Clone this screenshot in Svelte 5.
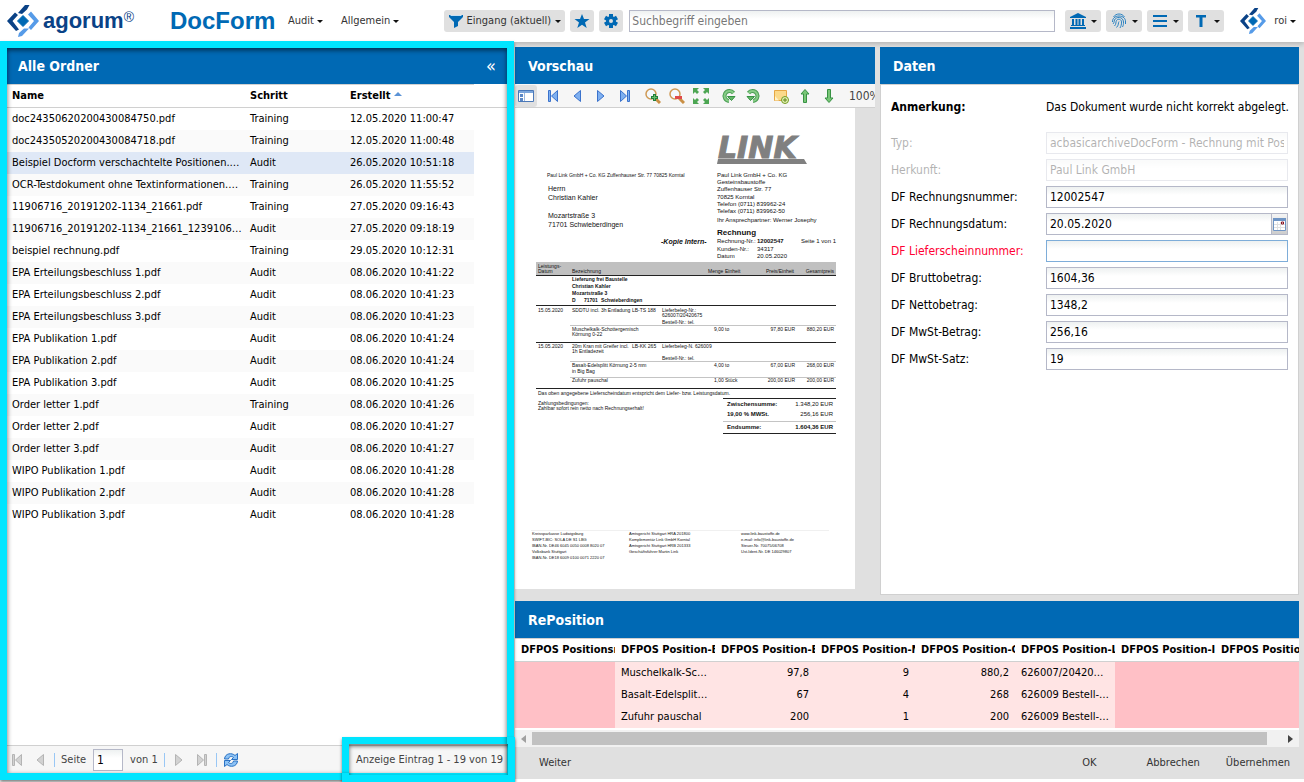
<script lang="ts">
  type Folder = [name: string, step: string, created: string];

  const folders: Folder[] = [
    ['doc24350620200430084750.pdf', 'Training', '12.05.2020 11:00:47'],
    ['doc24350520200430084718.pdf', 'Training', '12.05.2020 11:00:48'],
    ['Beispiel Docform verschachtelte Positionen.pdf', 'Audit', '26.05.2020 10:51:18'],
    ['OCR-Testdokument ohne Textinformationen.pdf', 'Training', '26.05.2020 11:55:52'],
    ['11906716_20191202-1134_21661.pdf', 'Training', '27.05.2020 09:16:43'],
    ['11906716_20191202-1134_21661_1239106.pdf', 'Audit', '27.05.2020 09:18:19'],
    ['beispiel rechnung.pdf', 'Training', '29.05.2020 10:12:31'],
    ['EPA Erteilungsbeschluss 1.pdf', 'Audit', '08.06.2020 10:41:22'],
    ['EPA Erteilungsbeschluss 2.pdf', 'Audit', '08.06.2020 10:41:23'],
    ['EPA Erteilungsbeschluss 3.pdf', 'Audit', '08.06.2020 10:41:23'],
    ['EPA Publikation 1.pdf', 'Audit', '08.06.2020 10:41:24'],
    ['EPA Publikation 2.pdf', 'Audit', '08.06.2020 10:41:24'],
    ['EPA Publikation 3.pdf', 'Audit', '08.06.2020 10:41:25'],
    ['Order letter 1.pdf', 'Training', '08.06.2020 10:41:26'],
    ['Order letter 2.pdf', 'Audit', '08.06.2020 10:41:27'],
    ['Order letter 3.pdf', 'Audit', '08.06.2020 10:41:27'],
    ['WIPO Publikation 1.pdf', 'Audit', '08.06.2020 10:41:28'],
    ['WIPO Publikation 2.pdf', 'Audit', '08.06.2020 10:41:28'],
    ['WIPO Publikation 3.pdf', 'Audit', '08.06.2020 10:41:28'],
  ];

  let selected = $state(2);

  const fields = [
    { id: 'typ', label: 'Typ:', value: 'acbasicarchiveDocForm - Rechnung mit Positionen', disabled: true },
    { id: 'herkunft', label: 'Herkunft:', value: 'Paul Link GmbH', disabled: true },
    { id: 'nummer', label: 'DF Rechnungsnummer:', value: '12002547' },
    { id: 'datum', label: 'DF Rechnungsdatum:', value: '20.05.2020', date: true },
    { id: 'lieferschein', label: 'DF Lieferscheinnummer:', value: '', active: true },
    { id: 'brutto', label: 'DF Bruttobetrag:', value: '1604,36' },
    { id: 'netto', label: 'DF Nettobetrag:', value: '1348,2' },
    { id: 'mwst', label: 'DF MwSt-Betrag:', value: '256,16' },
    { id: 'satz', label: 'DF MwSt-Satz:', value: '19' },
  ];

  const posHeads = [
    'DFPOS Positionsnummer',
    'DFPOS Position-Bezeichnung',
    'DFPOS Position-Einzelpreis',
    'DFPOS Position-Menge',
    'DFPOS Position-Gesamt',
    'DFPOS Position-Lieferschein',
    'DFPOS Position-Info',
    'DFPOS Position-Rabatt',
  ];
  const positions = [
    ['', 'Muschelkalk-Schotter', '97,8', '9', '880,2', '626007/20420675', '', ''],
    ['', 'Basalt-Edelsplitt Körnung', '67', '4', '268', '626009 Bestell-Nr.', '', ''],
    ['', 'Zufuhr pauschal', '200', '1', '200', '626009 Bestell-Nr.', '', ''],
  ];

  // Text runs on the invoice sheet: x, y, size, text, style flags (b = bold, i = italic, e = end-aligned)
  const sheet: [number, number, number, string, string?][] = [
    [32, 69, 5, 'Paul Link GmbH + Co. KG  Zuffenhauser Str. 77  70825 Korntal'],
    [33, 83, 7, 'Herrn'],
    [33, 92, 7, 'Christian Kahler'],
    [33, 110, 7, 'Mozartstraße 3'],
    [33, 119, 7, '71701 Schwieberdingen'],
    [146, 136, 7, '-Kopie Intern-', 'bi'],
    [202, 69, 6, 'Paul Link GmbH + Co. KG'],
    [202, 76, 6, 'Gesteinsbaustoffe'],
    [202, 83, 6, 'Zuffenhauser Str. 77'],
    [202, 91, 6, '70825 Korntal'],
    [202, 98, 6, 'Telefon (0711) 839962-24'],
    [202, 105, 6, 'Telefax (0711) 839962-50'],
    [202, 114, 6, 'Ihr Ansprechpartner: Werner Josephy'],
    [202, 127, 8, 'Rechnung', 'b'],
    [202, 135, 6, 'Rechnung-Nr.:'],
    [242, 135, 6, '12002547', 'b'],
    [286, 135, 6, 'Seite 1 von 1'],
    [202, 143, 6, 'Kunden-Nr.:'],
    [242, 143, 6, '34317'],
    [202, 150, 6, 'Datum'],
    [242, 150, 6, '20.05.2020'],
    [23, 160, 5, 'Leistungs-'],
    [23, 165, 5, 'Datum'],
    [57, 165, 5, 'Bezeichnung'],
    [193, 165, 5, 'Menge'],
    [210, 165, 5, 'Einheit'],
    [279, 165, 5, 'Preis/Einheit', 'e'],
    [319, 165, 5, 'Gesamtpreis', 'e'],
    [57, 173, 5, 'Lieferung frei Baustelle', 'b'],
    [57, 180, 5, 'Christian Kahler', 'b'],
    [57, 187, 5, 'Mozartstraße 3', 'b'],
    [57, 194, 5, 'D', 'b'],
    [69, 194, 5, '71701', 'b'],
    [86, 194, 5, 'Schwieberdingen', 'b'],
    [23, 204, 5, '15.05.2020'],
    [57, 204, 5, 'SDDTU incl. 3h Entladung'],
    [117, 204, 5, 'LB-TS 188'],
    [147, 204, 5, 'Lieferbeleg-Nr.:'],
    [147, 209, 5, '626007/20420675'],
    [147, 216, 5, 'Bestell-Nr.: tel.'],
    [57, 223, 5, 'Muschelkalk-Schottergemisch'],
    [57, 228, 5, 'Körnung 0-22'],
    [199, 223, 5, '9,00'],
    [210, 223, 5, 'to'],
    [280, 223, 5, '97,80 EUR', 'e'],
    [319, 223, 5, '880,20 EUR', 'e'],
    [23, 240, 5, '15.05.2020'],
    [57, 240, 5, '20m Kran mit Greifer incl.'],
    [117, 240, 5, 'LB-KK 265'],
    [57, 245, 5, '1h Entladezeit'],
    [147, 240, 5, 'Lieferbeleg-N.'],
    [180, 240, 5, '626009'],
    [147, 252, 5, 'Bestell-Nr.: tel.'],
    [57, 259, 5, 'Basalt-Edelsplitt Körnung 2-5 mm'],
    [57, 265, 5, 'in Big Bag'],
    [199, 259, 5, '4,00'],
    [210, 259, 5, 'to'],
    [280, 259, 5, '67,00 EUR', 'e'],
    [319, 259, 5, '268,00 EUR', 'e'],
    [57, 274, 5, 'Zufuhr pauschal'],
    [199, 274, 5, '1,00'],
    [210, 274, 5, 'Stück'],
    [280, 274, 5, '200,00 EUR', 'e'],
    [319, 274, 5, '200,00 EUR', 'e'],
    [23, 287, 5, 'Das oben angegebene Lieferscheindatum entspricht dem Liefer- bzw. Leistungsdatum.'],
    [23, 297, 5, 'Zahlungsbedingungen:'],
    [23, 302, 5, 'Zahlbar sofort rein netto nach Rechnungserhalt!'],
    [212, 298, 6, 'Zwischensumme:', 'b'],
    [318, 298, 6, '1.348,20 EUR', 'e'],
    [212, 308, 6, '19,00 % MWSt.', 'b'],
    [318, 308, 6, '256,16 EUR', 'e'],
    [212, 321, 6, 'Endsumme:', 'b'],
    [318, 321, 6, '1.604,36 EUR', 'be'],
    [17, 427, 4, 'Kreissparkasse Ludwigsburg'],
    [17, 433, 4, 'SWIFT-BIC: SOLA DE S1 LBG'],
    [17, 439, 4, 'IBAN-Nr. DE46 6045 0050 0008 8020 07'],
    [17, 445, 4, 'Volksbank Stuttgart'],
    [17, 451, 4, 'IBAN-Nr. DE18 6009 0100 0071 2220 07'],
    [114, 427, 4, 'Amtsgericht Stuttgart HRA 201800'],
    [114, 433, 4, 'Komplementär Link GmbH Korntal'],
    [114, 439, 4, 'Amtsgericht Stuttgart HRB 201333'],
    [114, 445, 4, 'Geschäftsführer Martin Link'],
    [226, 427, 4, 'www.link-baustoffe.de'],
    [226, 433, 4, 'e-mail: info@link-baustoffe.de'],
    [226, 439, 4, 'Steuer-Nr. 70075/06708'],
    [226, 445, 4, 'Ust-Ident-Nr. DE 146029807'],
  ];
</script>

{#snippet logo(size: number)}
  <svg width={size} height={size} viewBox="0 0 32 32" aria-hidden="true">
    <path d="M11 8l7-8h4.500L20 4.500 15 9zM8 7.500l3 2.500-5.500 6 6.500 8.500L9 26 0 16z" fill="#0a4286" />
    <path d="M24 6.500L32 16l-8 9-2.500-2.500L27 16l-6-6.500zM17 23.500l5 0L15 31l-4 1 1-4z" fill="#569be8" />
    <path d="M16 10.500l5.500 5.500-5.500 5.500-5.500-5.500z" fill="#0069b4" stroke="#0069b4" stroke-linejoin="round" />
  </svg>
{/snippet}

{#snippet caret()}
  <svg width="6" height="3" viewBox="0 0 6 3" aria-hidden="true"><path d="M0 0h6L3 3z" fill="#111" /></svg>
{/snippet}

{#snippet arrow(kind: 'first' | 'prev' | 'next' | 'last', off = false)}
  <svg
    class:flip={kind === 'next' || kind === 'last'}
    width="16" height="16" viewBox="0 0 16 16" aria-hidden="true"
    fill={off ? '#d2d2d2' : '#7fb0f0'} stroke={off ? '#b4b4b4' : '#3a72cc'}
  >
    {#if kind === 'first' || kind === 'last'}
      <path d="M3.500 2.500h2v11h-2zM12.500 2.500v11L6.500 8z" />
    {:else}
      <path d="M11.500 2.500v11L5 8z" />
    {/if}
  </svg>
{/snippet}

{#snippet lens(plus: boolean)}
  <svg width="16" height="16" viewBox="0 0 16 16" aria-hidden="true">
    <path d="M9 9l6 6" stroke="#c98f45" stroke-width="3" />
    <circle cx="6" cy="6" r="5" fill="#f4f8fc" stroke="#cf9a55" stroke-width="1.500" />
    {#if plus}
      <path d="M9.500 6v7M6 9.500h7" stroke="#23803a" stroke-width="3" />
      <path d="M9.500 7v5M7 9.500h5" stroke="#69bd6d" />
    {:else}
      <path d="M6 9.500h7" stroke="#e04a4a" stroke-width="3" />
    {/if}
  </svg>
{/snippet}

{#snippet rotate(flip: boolean)}
  <svg class:flip width="16" height="16" viewBox="0 0 16 16" aria-hidden="true">
    <path d="M12.500 5A5 5 0 1 0 8 13" fill="none" stroke="#4b9e54" stroke-width="4" />
    <path d="M12.500 5A5 5 0 1 0 8 13" fill="none" stroke="#86cc86" stroke-width="2" />
    <path d="M6.500 8.500h7.500L10.500 12.500z" fill="#62b767" stroke="#379244" />
  </svg>
{/snippet}

{#snippet vertical(down: boolean)}
  <svg class:down width="16" height="16" viewBox="0 0 16 16" aria-hidden="true">
    <path d="M8 1.500L12 6H9.500v8.500h-3V6H4z" fill="#78c576" stroke="#379244" />
  </svg>
{/snippet}

<div class="app">
  <header class="topbar">
    <a class="brand" href="#start">{@render logo(32)}<span>agorum<sup>®</sup></span></a>
    <h1>DocForm</h1>
    <nav>
      <button class="menu">Audit {@render caret()}</button>
      <button class="menu">Allgemein {@render caret()}</button>
    </nav>
    <div class="search">
      <button class="tool filter">
        <svg width="14" height="14" viewBox="0 0 14 14" aria-hidden="true">
          <path d="M0 1h14v2L9 8v4l-4 2V8L0 3z" fill="#0069b4" /><path d="M1 1h12l-1 1H2z" fill="#c5dff2" />
        </svg>
        Eingang (aktuell) {@render caret()}
      </button>
      <button class="tool square" aria-label="Favoriten">
        <svg width="16" height="16" viewBox="0 0 16 16" aria-hidden="true"><path d="M8 1l2 5h5.500L11 9.500l1.700 5.500L8 11.800 3.300 15 5 9.500.5 6H6z" fill="#0069b4" /></svg>
      </button>
      <button class="tool square" aria-label="Einstellungen">
        <svg width="14" height="14" viewBox="0 0 14 14" aria-hidden="true">
          <path d="M7 0v14M1 3.500l12 7M13 3.500l-12 7" stroke="#0069b4" stroke-width="4" />
          <circle cx="7" cy="7" r="3.500" fill="#e0e0e0" stroke="#0069b4" stroke-width="3" />
        </svg>
      </button>
      <input type="text" placeholder="Suchbegriff eingeben" aria-label="Suchbegriff eingeben" />
    </div>
    <div class="tools">
      <button class="tool" aria-label="Archiv">
        <svg width="16" height="16" viewBox="0 0 16 16" aria-hidden="true" fill="#0069b4">
          <path d="M8 0l8 4v1H0V4zM2 6h2v6H2zM5.500 6h2v6h-2zM8.500 6h2v6h-2zM12 6h2v6h-2zM1 12h14v1H1zM0 14h16v2H0z" />
        </svg>{@render caret()}
      </button>
      <button class="tool" aria-label="Identität">
        <svg width="16" height="16" viewBox="0 0 16 16" aria-hidden="true" fill="none" stroke="#2a82c2">
          <path d="M2.500 4C5 0 11 0 13.500 4M1.500 9C1 1 15 1 14.500 9v2M2 11c1-1 1-2 1.500-4C5 3.500 12 3 12.500 9c0 2 0 3-1 5M3.500 13c2-2 1-4 2-5.500 2-2.500 5-1 5 1.500 0 3-.5 4-1.500 6M5.500 14.500C8 12 7 10 8 8.500" />
        </svg>{@render caret()}
      </button>
      <button class="tool" aria-label="Liste">
        <svg width="16" height="16" viewBox="0 0 16 16" aria-hidden="true"><path d="M1 3h14M1 8h14M1 13h14" stroke="#0069b4" stroke-width="2" /></svg>{@render caret()}
      </button>
      <button class="tool" aria-label="Text">
        <svg width="16" height="16" viewBox="0 0 16 16" aria-hidden="true"><path d="M3 2h10v2.500H9.500V14h-3V4.500H3z" fill="#0069b4" /></svg>{@render caret()}
      </button>
    </div>
    <div class="user">{@render logo(26)}<button class="menu">roi {@render caret()}</button></div>
  </header>

  <main>
    <section class="folders">
      <div class="title"><h2>Alle Ordner</h2><button aria-label="Einklappen">«</button></div>
      <div class="list">
        <table>
          <colgroup><col class="c-name" /><col class="c-step" /><col class="c-date" /></colgroup>
          <thead>
            <tr>
              <th>Name</th>
              <th>Schritt</th>
              <th>Erstellt <svg width="8" height="5" viewBox="0 0 8 5" aria-hidden="true"><path d="M0 4h8L4 0z" fill="#5b93d6" /></svg></th>
            </tr>
          </thead>
          <tbody>
            {#each folders as [name, step, created], i}
              <tr class:selected={i === selected} onclick={() => (selected = i)}>
                <td>{name}</td><td>{step}</td><td>{created}</td>
              </tr>
            {/each}
          </tbody>
        </table>
      </div>
      <div class="paging">
        <button disabled aria-label="Erste Seite">{@render arrow('first', true)}</button>
        <button disabled aria-label="Vorherige Seite">{@render arrow('prev', true)}</button>
        <i></i>
        <label for="page">Seite</label>
        <input id="page" type="text" value="1" />
        <span>von 1</span>
        <i></i>
        <button disabled aria-label="Nächste Seite">{@render arrow('next', true)}</button>
        <button disabled aria-label="Letzte Seite">{@render arrow('last', true)}</button>
        <i></i>
        <button aria-label="Aktualisieren">
          <svg width="16" height="16" viewBox="0 0 16 16" aria-hidden="true">
            <path d="M1.500 7C2 1 9 .5 12 3.500l2.500-2v6H8.500l2-2C9 4 6 4 5.500 7z" fill="#8cc2f5" stroke="#2a72c4" />
            <path d="M14.500 9c-.5 6-7.500 6.500-10.500 3.500l-2.500 2v-6h6l-2 2C7 12 10 12 10.500 9z" fill="#8cc2f5" stroke="#2a72c4" />
          </svg>
        </button>
        <span class="count">Anzeige Eintrag 1 - 19 von 19</span>
      </div>
    </section>

    <div class="work">
      <div class="upper">
        <section class="preview">
          <div class="title"><h2>Vorschau</h2></div>
          <div class="viewbar">
            <button class="pressed" aria-label="Seitenleiste">
              <svg width="16" height="16" viewBox="0 0 16 16" aria-hidden="true">
                <path d="M.5 2.500h15v11H.5z" fill="#fff" stroke="#4a78b8" /><path d="M1 3h14v2H1z" fill="#7ba6dc" />
                <path d="M2 6h3v3H2zM2 10h3v3H2z" fill="#5b88c6" /><path d="M6.500 5v8" stroke="#9bb9df" />
              </svg>
            </button>
            <i></i>
            <button aria-label="Erste Seite">{@render arrow('first')}</button>
            <button aria-label="Zurück">{@render arrow('prev')}</button>
            <button aria-label="Vorwärts">{@render arrow('next')}</button>
            <button aria-label="Letzte Seite">{@render arrow('last')}</button>
            <i></i>
            <button aria-label="Vergrößern">{@render lens(true)}</button>
            <button aria-label="Verkleinern">{@render lens(false)}</button>
            <button aria-label="Einpassen">
              <svg width="16" height="16" viewBox="0 0 16 16" aria-hidden="true" fill="#4da653">
                <path d="M0 0h6L4 2l2 2-2 2-2-2-2 2zM16 0v6l-2-2-2 2-2-2 2-2-2-2zM0 16v-6l2 2 2-2 2 2-2 2 2 2zM16 16h-6l2-2-2-2 2-2 2 2 2-2z" />
              </svg>
            </button>
            <i></i>
            <button aria-label="Links drehen">{@render rotate(false)}</button>
            <button aria-label="Rechts drehen">{@render rotate(true)}</button>
            <i></i>
            <button aria-label="Notiz hinzufügen">
              <svg width="16" height="16" viewBox="0 0 16 16" aria-hidden="true">
                <path d="M1.500 2.500h12v10h-12z" fill="#fbd98a" stroke="#e6a743" /><path d="M2 8l4 4.500H2z" fill="#fff3cb" />
                <circle cx="12" cy="12" r="3.500" fill="#e6f2b4" stroke="#729a24" /><path d="M12 10v4M10 12h4" stroke="#5c861a" />
              </svg>
            </button>
            <button aria-label="Nach oben">{@render vertical(false)}</button>
            <button aria-label="Nach unten">{@render vertical(true)}</button>
            <span>100%</span>
          </div>
          <div class="canvas">
            <svg class="sheet" viewBox="0 0 340 481" role="img" aria-label="Rechnung 12002547">
              <path d="M0 0h340v481H0z" fill="#fff" />
              <text x="203" y="50" class="mark">LINK</text>
              <path d="M203 51h86l3 5h-90z" fill="#808080" />
              <path d="M21 154h300v13H21z" fill="#c0c0c0" />
              <g stroke="#222">
                <path d="M21 167.500h300M21 197.500h300M21 234.500h300M21 280.500h300M208 290.500h113M208 325.500h113" />
                <path d="M55 217.500h266M55 253.500h266M55 269.500h266M208 313.500h113" stroke="#c4c4c4" />
                <path d="M16 422.500h298" stroke="#f0f0f0" />
              </g>
              {#each sheet as [x, y, size, text, style = '']}
                <text
                  {x} {y}
                  font-size={size}
                  class:bold={style.includes('b')}
                  class:italic={style.includes('i')}
                  class:end={style.includes('e')}>{text}</text>
              {/each}
            </svg>
          </div>
        </section>

        <section class="data">
          <div class="title"><h2>Daten</h2></div>
          <form onsubmit={(e) => e.preventDefault()}>
            <p class="note"><b>Anmerkung:</b><span>Das Dokument wurde nicht korrekt abgelegt.</span></p>
            {#each fields as f}
              <div class="row" class:disabled={f.disabled} class:active={f.active}>
                <label for={f.id}>{f.label}</label>
                <div class="field">
                  <input id={f.id} type="text" value={f.value} disabled={f.disabled} />
                  {#if f.date}
                    <button type="button" aria-label="Datum wählen">
                      <svg width="13" height="13" viewBox="0 0 13 13" aria-hidden="true">
                        <path d="M.5.5h12v12H.5z" fill="#fff" stroke="#6f95c5" /><path d="M0 0h13v3H0z" fill="#6f95c5" />
                        <path d="M4.500 4v8M7.500 4v8M1 6.500h11M1 9.500h11" stroke="#e0e0e0" />
                        <path d="M8.500 4h2v2h-2z" fill="#fff" stroke="#8a1320" />
                      </svg>
                    </button>
                  {/if}
                </div>
              </div>
            {/each}
          </form>
        </section>
      </div>

      <section class="positions">
        <div class="title"><h2>RePosition</h2></div>
        <div class="grid">
          <table>
            <thead>
              <tr>{#each posHeads as head}<th>{head}</th>{/each}</tr>
            </thead>
            <tbody>
              {#each positions as row}
                <tr>
                  {#each row as cell, i}
                    <td class:empty={!cell} class:num={i > 1 && i < 5}>{cell}</td>
                  {/each}
                </tr>
              {/each}
            </tbody>
          </table>
        </div>
        <div class="scroll">
          <button aria-label="Nach links"><svg width="5" height="8" viewBox="0 0 5 8"><path d="M5 0v8L0 4z" fill="#a0a0a0" /></svg></button>
          <div class="track"><div class="thumb"></div></div>
          <button aria-label="Nach rechts"><svg width="5" height="8" viewBox="0 0 5 8"><path d="M0 0v8l5-4z" fill="#444" /></svg></button>
        </div>
      </section>

      <footer>
        <button>Weiter</button>
        <button class="ok">OK</button>
        <button>Abbrechen</button>
        <button>Übernehmen</button>
      </footer>
    </div>
  </main>
</div>

<style>
  :global(body) {
    background: #fff;
  }

  .app {
    --blue: #0069b4;
    --cyan: #00e5ff;
    --line: #d0d0d0;
    display: flex;
    flex-direction: column;
    min-height: 100vh;
    font: 12px/16px 'DejaVu Sans Condensed', Tahoma, 'Noto Sans', sans-serif;
    color: #000;
    overflow: hidden;
  }

  .app *,
  .app *::after {
    box-sizing: border-box;
  }

  button {
    display: flex;
    align-items: center;
    justify-content: center;
    padding: 0;
    border: 0;
    background: none;
    font: inherit;
    color: inherit;
  }

  svg {
    flex: none;
  }

  .flip {
    transform: scaleX(-1);
  }
  .down {
    transform: scaleY(-1);
  }

  input {
    width: 100%;
    height: 22px;
    padding: 0 3px;
    border: 1px solid #b5b8c8;
    background: linear-gradient(#eef1f1, #fff 8px);
    font: inherit;
    color: inherit;
  }

  /* ---- top bar ---- */
  .topbar {
    position: relative;
    z-index: 1;
    display: flex;
    align-items: center;
    height: 42px;
    padding: 0 8px 0 7px;
    background: #fff;
    box-shadow: 0 2px 5px rgba(0, 0, 0, 0.2);
    font-size: 11px;
    color: #333;
  }

  .brand {
    display: flex;
    align-items: center;
    gap: 4px;
    width: 163px;
    font: bold 22px/28px 'Liberation Sans', Arial, sans-serif;
    color: #0a4286;
    text-decoration: none;
  }
  .brand sup {
    font-size: 14px;
    line-height: 14px;
    font-weight: normal;
    vertical-align: 6px;
  }

  h1 {
    width: 118px;
    margin: 0;
    font: bold 24px/28px 'Liberation Sans', Arial, sans-serif;
    color: var(--blue);
  }

  nav {
    display: flex;
    gap: 18px;
  }

  .menu {
    gap: 3px;
  }

  .search {
    display: flex;
    flex: 1;
    gap: 5px;
    margin: 0 10px 0 45px;
  }
  .search input {
    margin-left: 1px;
    padding: 0 2px;
    font-size: 12px;
  }
  .search input::placeholder {
    color: #777;
    opacity: 1;
  }

  .tools {
    display: flex;
    gap: 5px;
  }

  .tool {
    flex: none;
    gap: 5px;
    width: 36px;
    height: 22px;
    border-radius: 3px;
    background: #e0e0e0;
  }
  .tool.filter {
    width: 121px;
    gap: 4px;
    white-space: nowrap;
  }
  .tool.square {
    width: 24px;
  }

  .user {
    display: flex;
    align-items: center;
    gap: 8px;
    margin-left: 16px;
  }

  /* ---- panels ---- */
  main {
    display: grid;
    grid-template-columns: 514fr 784fr;
    gap: 1px;
    flex: 1;
    padding-right: 5px;
    margin-bottom: 3px;
    background: #e0e0e0;
  }

  .title {
    display: flex;
    align-items: center;
    justify-content: space-between;
    height: 37px;
    padding: 0 11px 0 13px;
    background: var(--blue);
    color: #fff;
  }
  .title h2 {
    margin: 0;
    font-size: 14px;
    line-height: 18px;
  }
  .title button {
    font-size: 18px;
  }

  table {
    border-collapse: separate;
    border-spacing: 0;
    table-layout: fixed;
    font-size: 11px;
  }
  th,
  td {
    height: 22px;
    padding: 0 3px 0 5px;
    text-align: left;
    white-space: nowrap;
    overflow: hidden;
    text-overflow: ellipsis;
  }
  th {
    height: 24px;
    border: 1px solid var(--line);
    border-width: 1px 0;
  }

  /* ---- folder list ---- */
  .folders {
    position: relative;
    z-index: 2;
    display: flex;
    flex-direction: column;
    margin: -1px 0;
    min-width: 0;
    border: 7px solid var(--cyan);
    background: #fff;
    box-shadow: 0 2px 3px rgba(0, 0, 0, 0.5);
  }
  .folders::after {
    content: '';
    position: absolute;
    inset: 0;
    box-shadow: inset 0 2px 5px rgba(0, 0, 0, 0.6);
    pointer-events: none;
  }
  .folders .title {
    height: 36px;
    padding-left: 11px;
  }

  .list {
    flex: 1;
    background: linear-gradient(var(--line), var(--line)) 0 23px / 100% 1px no-repeat;
  }
  .list table {
    width: 467px;
  }
  .list svg {
    vertical-align: 2px;
  }
  .c-name {
    width: 238px;
  }
  .c-step {
    width: 100px;
  }
  .c-date {
    width: 129px;
  }
  tbody tr:nth-child(even) {
    background: #fafafa;
  }
  tbody tr.selected {
    background: #dfe8f6;
  }

  .paging {
    display: flex;
    align-items: center;
    gap: 7px;
    height: 28px;
    padding: 0 4px 0 2px;
    border-top: 1px solid var(--line);
    background: #f6f6f6;
    font-size: 11px;
    color: #444;
  }
  .paging input {
    width: 30px;
    color: #000;
    font-size: 12px;
  }
  .paging i {
    margin: 0 -1px;
  }
  i {
    width: 1px;
    height: 14px;
    background: #99c7f5;
  }
  .count {
    position: relative;
    margin-left: auto;
  }
  .count::after {
    content: '';
    position: absolute;
    inset: -15px -12px -14px -14px;
    border: 7px solid var(--cyan);
    box-shadow: 0 2px 3px rgba(0, 0, 0, 0.5), inset 0 2px 4px rgba(0, 0, 0, 0.6);
    pointer-events: none;
  }

  /* ---- right side ---- */
  .work {
    display: flex;
    flex-direction: column;
    min-width: 0;
    padding-top: 5px;
  }

  .upper {
    display: grid;
    grid-template-columns: 360fr 419fr;
    gap: 5px;
    flex: 1;
    margin-bottom: 6px;
  }

  .preview {
    min-width: 0;
  }

  .viewbar {
    position: relative;
    display: flex;
    align-items: center;
    gap: 8px;
    height: 24px;
    overflow: hidden;
    background: #f6f6f6;
    border-bottom: 1px solid var(--line);
    font-size: 12px;
    color: #444;
  }
  .viewbar i {
    margin: 0 -2px;
  }
  .viewbar span {
    margin-left: 4px;
  }
  .pressed {
    width: 22px;
    height: 22px;
    flex: none;
    margin-right: -4px;
    border-radius: 3px;
    background: #e0e0e0;
  }

  .canvas {
    padding-right: 20px;
  }
  .sheet {
    display: block;
    width: 100%;
    font-family: 'Liberation Sans', Arial, sans-serif;
    fill: #111;
  }
  .mark {
    font: italic bold 30px 'DejaVu Sans', sans-serif;
    fill: #808080;
    stroke: #808080;
  }
  .bold {
    font-weight: bold;
  }
  .italic {
    font-style: italic;
  }
  .end {
    text-anchor: end;
  }

  .data {
    display: flex;
    flex-direction: column;
    min-width: 0;
  }
  form {
    flex: 1;
    padding: 11px 10px 10px;
    border: 1px solid var(--line);
    background: #fff;
  }
  .note,
  .row {
    display: grid;
    grid-template-columns: 155px 1fr;
    align-items: center;
    height: 22px;
    margin: 0 0 5px;
    white-space: nowrap;
  }
  .note {
    margin-bottom: 14px;
  }
  .field {
    display: flex;
    min-width: 0;
  }
  .field button {
    flex: none;
    width: 17px;
    margin-left: -1px;
    border: 1px solid #b5b8c8;
    background: linear-gradient(#f5f5f5, #ccc);
  }
  .disabled {
    opacity: 0.3;
  }
  .active label {
    color: #ff0033;
  }
  .active input {
    border-color: #7eadd9;
  }

  /* ---- positions ---- */
  .positions {
    background: #fff;
  }
  .grid {
    overflow: hidden;
  }
  .grid table {
    width: 800px;
  }
  .grid th {
    padding: 0 0 0 6px;
    text-overflow: clip;
  }
  .grid td {
    padding: 0 6px;
    background: #ffe4e4;
  }
  .grid td.empty {
    background: #ffc0c6;
  }
  .grid td.num {
    text-align: right;
  }

  .scroll {
    display: flex;
    height: 17px;
    margin-top: 2px;
    background: #f1f1f1;
  }
  .scroll button {
    width: 17px;
  }
  .track {
    flex: 1;
    padding: 2px 0;
  }
  .thumb {
    width: 98%;
    height: 13px;
    background: #c1c1c1;
  }

  footer {
    display: flex;
    align-items: center;
    height: 32px;
    padding: 0 9px 0 24px;
    gap: 26px;
    font-size: 11px;
    color: #333;
  }
  .ok {
    margin: 0 24px 0 auto;
  }
</style>
